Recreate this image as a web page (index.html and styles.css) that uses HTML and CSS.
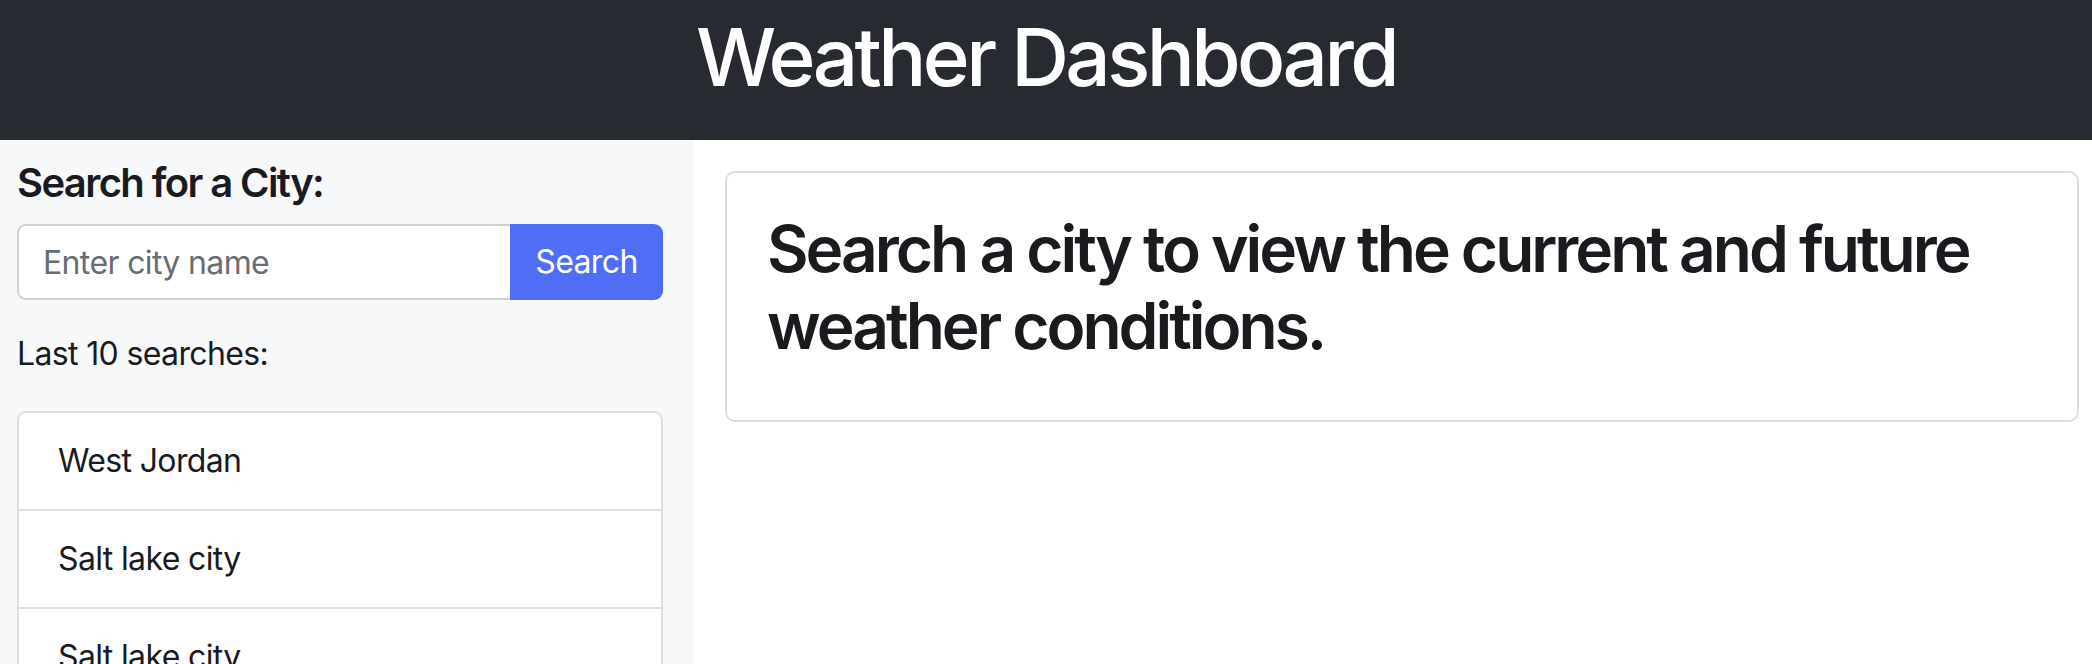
FILE: index.html
```html
<!DOCTYPE html>
<html lang="en">
<head>
<meta charset="utf-8">
<title>Weather Dashboard</title>
<link rel="stylesheet" href="styles.css">
</head>
<body>
<header class="site-header">
  <h1 class="site-title">Weather Dashboard</h1>
</header>
<div class="layout">
  <aside class="sidebar">
    <h5 class="search-label">Search for a City:</h5>
    <form class="input-group" onsubmit="return false;">
      <input class="city-input" type="text" placeholder="Enter city name">
      <button class="search-btn" type="submit">Search</button>
    </form>
    <p class="history-label">Last 10 searches:</p>
    <ul class="history-list">
      <li class="history-item">West Jordan</li>
      <li class="history-item">Salt lake city</li>
      <li class="history-item">Salt lake city</li>
    </ul>
  </aside>
  <main class="main">
    <section class="card">
      <h2 class="card-title">Search a city to view the current and future weather conditions.</h2>
    </section>
  </main>
</div>
</body>
</html>
```
FILE: styles.css
```css
* { box-sizing: border-box; }
html, body { margin: 0; padding: 0; }
body {
  font-family: Inter, "Noto Sans", "Liberation Sans", sans-serif;
  font-size: 32px;
  line-height: 1.5;
  letter-spacing: -0.02em;
  color: #1a1b1f;
  background: #fff;
  height: 664px;
  overflow: hidden;
}
.site-header {
  background: #272a30;
  height: 140px;
  padding-top: 9px;
  text-align: center;
}
.site-title {
  margin: 0;
  font-size: 80px;
  font-weight: 500;
  line-height: 1.2;
  color: #fff;
  letter-spacing: -0.045em;
}
.layout {
  display: flex;
  height: 524px;
}
.sidebar {
  width: 694px;
  flex: none;
  background: #f7f8f9;
  padding: 19px 31px 0 17px;
}
.search-label {
  margin: 0 0 17px;
  font-size: 40px;
  font-weight: 600;
  line-height: 1.2;
  letter-spacing: -0.04em;
}
.input-group {
  display: flex;
  margin: 0;
}
.city-input {
  flex: 1;
  min-width: 0;
  height: 76px;
  font: inherit;
  font-size: 32px;
  letter-spacing: -0.02em;
  padding: 12px 24px;
  border: 2px solid #ced2d8;
  border-right: none;
  border-radius: 9px 0 0 9px;
  background: #fff;
  color: #1a1b1f;
}
.city-input::placeholder { color: #686c75; }
.search-btn {
  width: 153px;
  height: 76px;
  font: inherit;
  font-size: 32px;
  letter-spacing: -0.02em;
  color: #fff;
  background: #4f6ef5;
  border: none;
  border-radius: 0 9px 9px 0;
  padding: 0;
}
.history-label {
  margin: 30px 0 33px;
}
.history-list {
  list-style: none;
  margin: 0;
  padding: 0;
  border: 2px solid #dcdee1;
  border-radius: 9px;
  background: #fff;
}
.history-item {
  padding: 24px 39px;
  border-bottom: 2px solid #dcdee1;
}
.main {
  flex: 1;
  padding: 31px 13px 0 31px;
}
.card {
  border: 2px solid #dcdde0;
  border-radius: 10px;
  padding: 38px 40px 39px;
}
.card-title {
  margin: 0 0 16px;
  font-size: 64px;
  font-weight: 600;
  line-height: 1.2;
  letter-spacing: -0.047em;
}
```
